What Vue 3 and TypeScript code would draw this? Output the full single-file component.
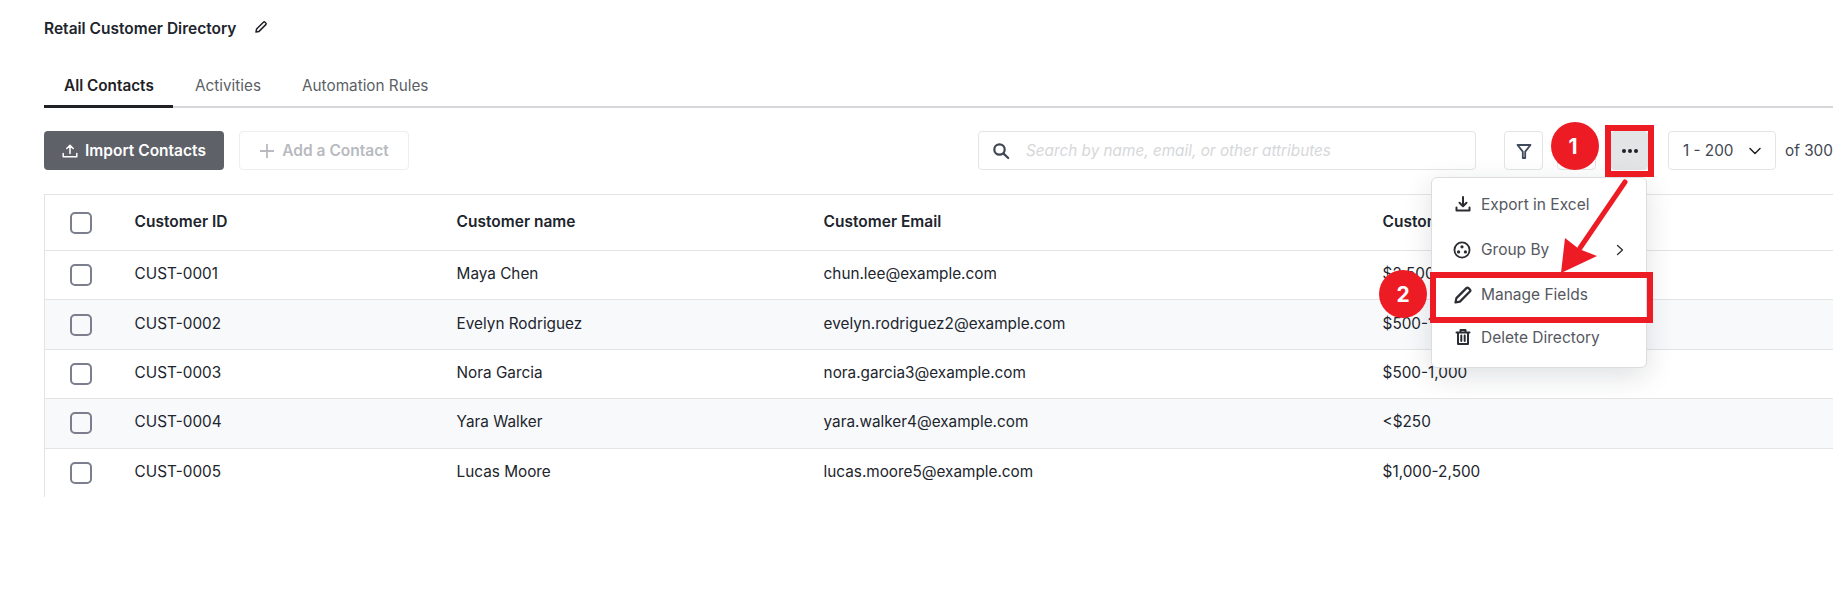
<script setup lang="ts">
const rows = [
  { id: 'CUST-0001', name: 'Maya Chen', email: 'chun.lee@example.com', spend: '$2,500+' },
  { id: 'CUST-0002', name: 'Evelyn Rodriguez', email: 'evelyn.rodriguez2@example.com', spend: '$500-1,000' },
  { id: 'CUST-0003', name: 'Nora Garcia', email: 'nora.garcia3@example.com', spend: '$500-1,000' },
  { id: 'CUST-0004', name: 'Yara Walker', email: 'yara.walker4@example.com', spend: '<$250' },
  { id: 'CUST-0005', name: 'Lucas Moore', email: 'lucas.moore5@example.com', spend: '$1,000-2,500' },
]
</script>

<template>
  <div class="page">
    <div class="title-row">
      <span class="title">Retail Customer Directory</span>
      <svg class="title-edit" width="14" height="14" viewBox="0 0 14 14" fill="none" stroke="#1f2126" stroke-width="1.5" stroke-linejoin="round">
        <path d="M2 12l.6-3L9.4 2.2a1.1 1.1 0 0 1 1.6 0l.8.8a1.1 1.1 0 0 1 0 1.6L5 11.4z" />
      </svg>
    </div>

    <div class="tabs">
      <div class="tab active">All Contacts</div>
      <div class="tab">Activities</div>
      <div class="tab">Automation Rules</div>
    </div>

    <div class="toolbar">
      <button class="btn primary">
        <svg width="16" height="16" viewBox="0 0 16 16" fill="none" stroke="#fff" stroke-width="1.5" stroke-linecap="round" stroke-linejoin="round">
          <path d="M8 10.5V2.5M4.8 5.5L8 2.3l3.2 3.2M1.2 10.5v3.2h13.6v-3.2" />
        </svg>
        Import Contacts
      </button>
      <button class="btn ghost">
        <svg width="16" height="16" viewBox="0 0 16 16" fill="none" stroke="#b8bac0" stroke-width="1.8">
          <path d="M8 1v14M1 8h14" />
        </svg>
        Add a Contact
      </button>

      <div class="search">
        <svg width="18" height="18" viewBox="0 0 18 18" fill="none" stroke="#3f4652" stroke-width="2.2" stroke-linecap="round">
          <circle cx="7.5" cy="7.5" r="5.2" />
          <path d="M11.6 11.6l4.6 4.4" />
        </svg>
        <span>Search by name, email, or other attributes</span>
      </div>

      <button class="icon-btn first">
        <svg width="16" height="16" viewBox="0 0 16 16" fill="none" stroke="#414a5a" stroke-width="1.8" stroke-linejoin="round">
          <path d="M1.5 2h13L9.2 8.6V15H6.8V8.6z" />
        </svg>
      </button>
      <button class="icon-btn"></button>
      <button class="icon-btn more">
        <span class="dot"></span><span class="dot"></span><span class="dot"></span>
      </button>

      <div class="pager">
        1 - 200
        <svg width="12" height="8" viewBox="0 0 12 8" fill="none" stroke="#1f2126" stroke-width="1.5" stroke-linecap="round" stroke-linejoin="round">
          <path d="M1 1.5l5 5 5-5" />
        </svg>
      </div>
      <span class="total">of 300</span>
    </div>

    <div class="table">
      <div class="row head">
        <div class="cell check"><span class="box"></span></div>
        <div class="cell">Customer ID</div>
        <div class="cell">Customer name</div>
        <div class="cell">Customer Email</div>
        <div class="cell">Customer Spend</div>
      </div>
      <div v-for="row in rows" :key="row.id" class="row">
        <div class="cell check"><span class="box"></span></div>
        <div class="cell">{{ row.id }}</div>
        <div class="cell">{{ row.name }}</div>
        <div class="cell">{{ row.email }}</div>
        <div class="cell">{{ row.spend }}</div>
      </div>
    </div>

    <!-- open menu -->
    <div class="menu">
      <div class="menu-item export">
        <svg width="18" height="18" viewBox="0 0 18 18" fill="none" stroke="#2b2d33" stroke-width="2" stroke-linecap="round" stroke-linejoin="round">
          <path d="M9 2v9M5.5 7.8L9 11.2l3.5-3.4M2.5 12.5v2.9h13v-2.9" />
        </svg>
        Export in Excel
      </div>
      <div class="menu-item group">
        <svg width="18" height="18" viewBox="0 0 20 20" fill="none">
          <circle cx="10" cy="10" r="8.4" stroke="#2b2d33" stroke-width="2" />
          <circle cx="10" cy="6.4" r="1.8" fill="#2b2d33" />
          <circle cx="6.2" cy="12.2" r="1.8" fill="#2b2d33" />
          <circle cx="13.8" cy="12.2" r="1.8" fill="#2b2d33" />
        </svg>
        Group By
        <svg class="chev" width="8" height="12" viewBox="0 0 8 12" fill="none" stroke="#2b2d33" stroke-width="1.3" stroke-linecap="round" stroke-linejoin="round">
          <path d="M1.5 1.5L6.5 6l-5 4.5" />
        </svg>
      </div>
      <div class="menu-item manage">
        <svg width="18" height="18" viewBox="0 0 18 18" fill="none" stroke="#2b2d33" stroke-width="2.2" stroke-linejoin="round">
          <path d="M1.5 16.5l.9-4.4L12.4 2.1a1.5 1.5 0 0 1 2.1 0l1.4 1.4a1.5 1.5 0 0 1 0 2.1L5.9 15.6z" />
        </svg>
        Manage Fields
      </div>
      <div class="menu-item delete">
        <svg width="18" height="18" viewBox="0 0 18 18" fill="none" stroke="#2b2d33" stroke-width="2" stroke-linecap="round" stroke-linejoin="round">
          <path d="M2.5 4.5h13M6.5 4.5V2h5v2.5M4 4.5V16h10V4.5M7.3 7.5v5.5M10.7 7.5v5.5" />
        </svg>
        Delete Directory
      </div>
    </div>

    <!-- tutorial marks -->
    <div class="mark-box more-mark"></div>
    <div class="mark-box manage-mark"></div>
    <div class="badge badge-one">1</div>
    <div class="badge badge-two">2</div>
    <svg class="arrow" width="90" height="110" viewBox="0 0 90 110" fill="none">
      <path d="M69 6L24 72" stroke="#ed1c24" stroke-width="5" stroke-linecap="round" />
      <path d="M5 97L9 62L23 73L41 80Z" fill="#ed1c24" />
    </svg>
  </div>
</template>

<style scoped>
.page {
  position: relative;
  width: 1833px;
  height: 601px;
  overflow: hidden;
  background: #fff;
  box-sizing: border-box;
  padding-left: 44px;
  font-family: Inter, "Liberation Sans", sans-serif;
  font-size: 15.3px;
  color: #20242c;
}

.title-row {
  display: flex;
  align-items: center;
  gap: 18px;
  height: 56px;
}

.title {
  font-size: 15.5px;
  font-weight: 600;
}

.title-edit {
  margin-top: -2px;
}

.tabs {
  display: flex;
  width: 1833px;
  height: 52px;
  box-sizing: border-box;
  border-bottom: 2px solid #d6d7da;
}

.tab {
  padding: 20px 19px 0;
  color: #5c5f66;
}

.tab.active {
  width: 129px;
  height: 52px;
  box-sizing: border-box;
  padding-left: 20px;
  border-bottom: 3px solid #1f2126;
  font-weight: 600;
  color: #1f2126;
  white-space: nowrap;
}

.tab + .tab {
  padding-left: 22px;
}

.toolbar {
  display: flex;
  align-items: center;
  height: 39px;
  margin-top: 23px;
  width: 1900px;
}

.btn {
  display: flex;
  align-items: center;
  justify-content: center;
  gap: 7px;
  height: 39px;
  box-sizing: border-box;
  border-radius: 4px;
  font: inherit;
  font-size: 15.5px;
  font-weight: 600;
}

.btn.primary {
  width: 180px;
  background: #5e6168;
  border: 0;
  color: #fff;
}

.btn.ghost {
  width: 170px;
  margin-left: 15px;
  background: #fff;
  border: 1px solid #eeeef0;
  color: #b8bac0;
}

.search {
  display: flex;
  align-items: center;
  gap: 16px;
  width: 498px;
  height: 39px;
  box-sizing: border-box;
  margin-left: 569px;
  padding-left: 13px;
  border: 1px solid #e3e4e6;
  border-radius: 4px;
  font-style: italic;
  color: #d6d7da;
}

.icon-btn {
  display: flex;
  align-items: center;
  justify-content: center;
  gap: 2px;
  width: 39px;
  height: 39px;
  box-sizing: border-box;
  margin-left: 14px;
  padding: 0;
  background: #fff;
  border: 1px solid #e3e4e6;
  border-radius: 4px;
}

.icon-btn.first {
  margin-left: 28px;
}

.icon-btn.more {
  width: 37px;
  margin-left: 15px;
  background: #e3e4e6;
}

.dot {
  width: 4px;
  height: 4px;
  border-radius: 50%;
  background: #1f2126;
}

.pager {
  display: flex;
  align-items: center;
  justify-content: space-between;
  width: 108px;
  height: 39px;
  box-sizing: border-box;
  margin-left: 20px;
  padding: 0 14px;
  border: 1px solid #e3e4e6;
  border-radius: 4px;
  color: #3f4652;
}

.total {
  margin-left: 9px;
  color: #3f4652;
}

.table {
  width: 1900px;
  margin-top: 24px;
  border-top: 1px solid #e3e4e6;
  border-left: 1px solid #e3e4e6;
}

.row {
  display: grid;
  grid-template-columns: 89.6px 322px 367px 559px 1fr;
  align-items: center;
  height: 49.4px;
  border-bottom: 1px solid #e3e4e6;
  box-sizing: border-box;
  background: #fff;
}

.row:nth-child(odd) {
  background: #f8f9fb;
}

.row.head {
  height: 56px;
  font-size: 15.5px;
  font-weight: 600;
  background: #fff;
}

.row:last-child {
  border-bottom: 0;
  height: 48.4px;
}

.cell {
  padding-bottom: 3px;
}

.check {
  padding: 0 0 0 25px;
  display: flex;
}

.box {
  width: 22px;
  height: 22px;
  box-sizing: border-box;
  border: 2px solid #7b7e8c;
  border-radius: 5px;
}

.menu {
  position: absolute;
  left: 1431px;
  top: 177px;
  width: 216px;
  height: 191px;
  box-sizing: border-box;
  padding-top: 4px;
  background: #fff;
  border: 1px solid #dcdde0;
  border-radius: 6px;
  box-shadow: 0 8px 28px rgba(30, 35, 50, 0.14);
  color: #55585f;
  font-size: 15.5px;
}

.menu-item {
  position: relative;
  display: flex;
  align-items: center;
  gap: 9px;
  height: 45px;
  padding-left: 22px;
}

.menu-item.export {
  height: 46px;
  margin-top: -1px;
}

.menu-item.group {
  padding-left: 21px;
  gap: 10px;
}

.menu-item.delete {
  height: 42px;
  margin-top: -1px;
}

.chev {
  position: absolute;
  right: 22px;
}

.mark-box {
  position: absolute;
  box-sizing: border-box;
  border: 6px solid #ed1c24;
}

.more-mark {
  left: 1605px;
  top: 125px;
  width: 49px;
  height: 52px;
}

.manage-mark {
  left: 1430px;
  top: 272px;
  width: 223px;
  height: 51px;
}

.badge {
  position: absolute;
  display: flex;
  align-items: center;
  justify-content: center;
  width: 48px;
  height: 48px;
  border-radius: 50%;
  background: #ed1c24;
  color: #fff;
  font-size: 21px;
  font-weight: 700;
}

.badge-one {
  left: 1551px;
  top: 122px;
  box-sizing: border-box;
  padding-right: 4px;
}

.badge-two {
  left: 1379px;
  top: 270px;
}

.arrow {
  position: absolute;
  left: 1556px;
  top: 176px;
}
</style>
